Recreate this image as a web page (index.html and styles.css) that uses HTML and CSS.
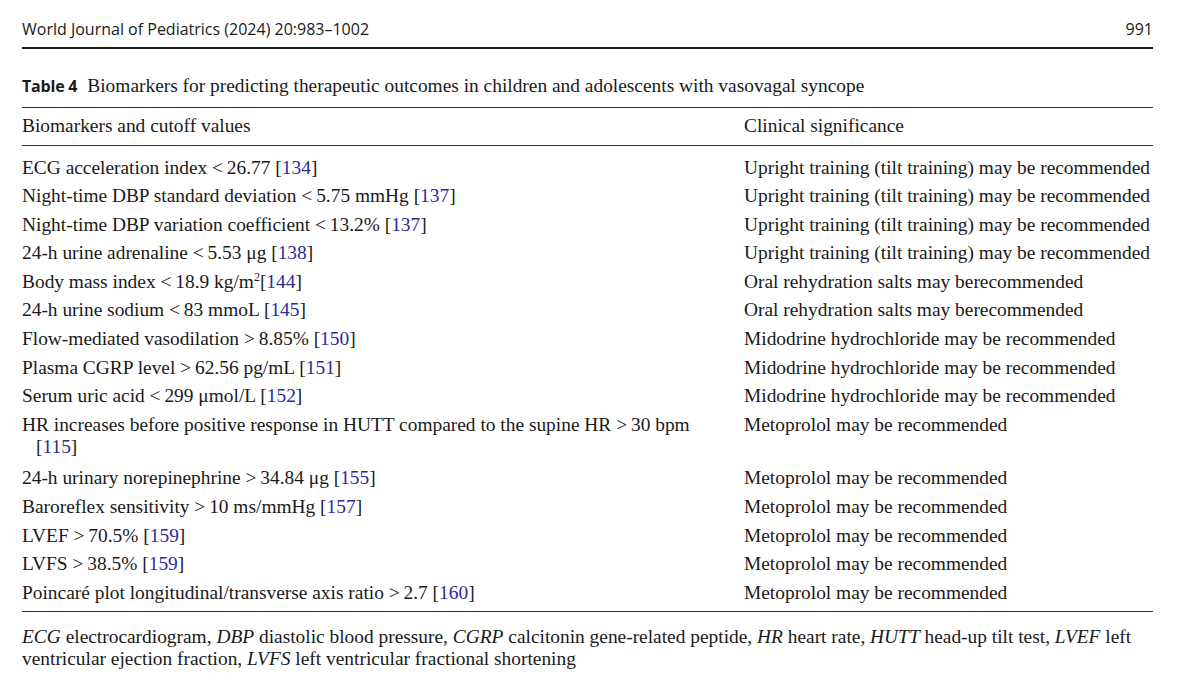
FILE: index.html
```html
<!DOCTYPE html>
<html lang="en">
<head>
    <meta charset="UTF-8">
    <title>World Journal of Pediatrics - Table 4</title>
    <link rel="stylesheet" href="styles.css">
</head>
<body>
    <div class="page">
        <div class="running-head">
            <span>World Journal of Pediatrics (2024) 20:983–1002</span>
            <span>991</span>
        </div>

        <div class="caption">
            <b>Table 4</b>Biomarkers for predicting therapeutic outcomes in children and adolescents with vasovagal syncope
        </div>

        <table class="tbl">
            <thead>
                <tr>
                    <th class="c1">Biomarkers and cutoff values</th>
                    <th>Clinical significance</th>
                </tr>
            </thead>
            <tbody>
                <tr><td class="c1">ECG acceleration index &lt;&thinsp;26.77 [<a>134</a>]</td><td>Upright training (tilt training) may be recommended</td></tr>
                <tr><td class="c1">Night-time DBP standard deviation &lt;&thinsp;5.75 mmHg [<a>137</a>]</td><td>Upright training (tilt training) may be recommended</td></tr>
                <tr><td class="c1">Night-time DBP variation coefficient &lt;&thinsp;13.2% [<a>137</a>]</td><td>Upright training (tilt training) may be recommended</td></tr>
                <tr><td class="c1">24-h urine adrenaline &lt;&thinsp;5.53 μg [<a>138</a>]</td><td>Upright training (tilt training) may be recommended</td></tr>
                <tr><td class="c1">Body mass index &lt;&thinsp;18.9 kg/m<sup>2</sup>[<a>144</a>]</td><td>Oral rehydration salts may berecommended</td></tr>
                <tr><td class="c1">24-h urine sodium &lt;&thinsp;83 mmoL [<a>145</a>]</td><td>Oral rehydration salts may berecommended</td></tr>
                <tr><td class="c1">Flow-mediated vasodilation &gt;&thinsp;8.85% [<a>150</a>]</td><td>Midodrine hydrochloride may be recommended</td></tr>
                <tr><td class="c1">Plasma CGRP level &gt;&thinsp;62.56 pg/mL [<a>151</a>]</td><td>Midodrine hydrochloride may be recommended</td></tr>
                <tr><td class="c1">Serum uric acid &lt;&thinsp;299 μmol/L [<a>152</a>]</td><td>Midodrine hydrochloride may be recommended</td></tr>
                <tr class="wrap"><td class="c1">HR increases before positive response in HUTT compared to the supine HR &gt;&thinsp;30 bpm [<a>115</a>]</td><td>Metoprolol may be recommended</td></tr>
                <tr><td class="c1">24-h urinary norepinephrine &gt;&thinsp;34.84 μg [<a>155</a>]</td><td>Metoprolol may be recommended</td></tr>
                <tr><td class="c1">Baroreflex sensitivity &gt;&thinsp;10 ms/mmHg [<a>157</a>]</td><td>Metoprolol may be recommended</td></tr>
                <tr><td class="c1">LVEF &gt;&thinsp;70.5% [<a>159</a>]</td><td>Metoprolol may be recommended</td></tr>
                <tr><td class="c1">LVFS &gt;&thinsp;38.5% [<a>159</a>]</td><td>Metoprolol may be recommended</td></tr>
                <tr><td class="c1">Poincaré plot longitudinal/transverse axis ratio &gt;&thinsp;2.7 [<a>160</a>]</td><td>Metoprolol may be recommended</td></tr>
            </tbody>
        </table>

        <p class="note">
            <i>ECG</i> electrocardiogram, <i>DBP</i> diastolic blood pressure, <i>CGRP</i> calcitonin gene-related peptide, <i>HR</i> heart rate, <i>HUTT</i> head-up tilt test, <i>LVEF</i> left ventricular ejection fraction, <i>LVFS</i> left ventricular fractional shortening
        </p>
    </div>
</body>
</html>
```

FILE: styles.css
```css
*{
    margin: 0;
    padding: 0;
}
body{
    background: #fff;
    color: #1a1a1a;
    font-family: "Liberation Serif", "Times New Roman", serif;
}
.page{
    width: 1131px;
    padding: 18px 0 0 22px;
}
.running-head{
    display: flex;
    justify-content: space-between;
    font-family: "Open Sans", "Noto Sans", sans-serif;
    font-size: 16px;
    line-height: 22px;
    padding-bottom: 7px;
    border-bottom: 2px solid #1a1a1a;
}
.caption{
    margin-top: 26px;
    font-size: 19.4px;
    line-height: 22px;
    padding-bottom: 10px;
    border-bottom: 1px solid #333;
}
.caption b{
    font-family: "Open Sans", "Noto Sans", sans-serif;
    font-size: 16px;
    letter-spacing: -0.2px;
    margin-right: 10px;
}
.tbl{
    width: 100%;
    border-collapse: collapse;
    font-size: 19.4px;
    line-height: 22.5px;
}
.tbl th{
    font-weight: normal;
    text-align: left;
    padding: 7px 0 7.5px;
    border-bottom: 1.5px solid #333;
}
.tbl td{
    vertical-align: top;
    padding: 3px 0 3.1px;
}
.tbl tbody tr:first-child td{
    padding-top: 10.5px;
}
.tbl tr.wrap td{
    padding-bottom: 5.5px;
}
.tbl tbody tr:last-child td{
    padding-bottom: 7px;
    border-bottom: 1.5px solid #333;
}
.tbl .c1{
    width: 722px;
    padding-right: 30px;
    box-sizing: border-box;
}
.tbl td.c1{
    padding-left: 14px;
    text-indent: -14px;
}
.tbl a{
    color: #2b2ba0;
}
.tbl sup{
    font-size: 12px;
    line-height: 0;
}
.note{
    margin-top: 14px;
    font-size: 19.4px;
    line-height: 22px;
}
```
